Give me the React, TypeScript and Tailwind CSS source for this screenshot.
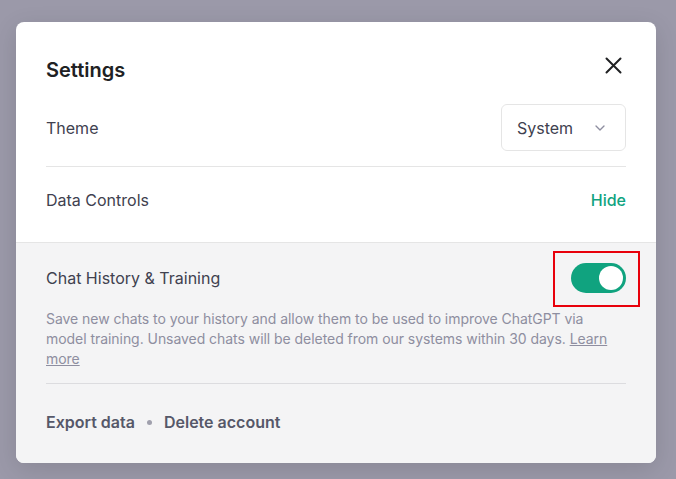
import { ChevronDown } from 'lucide-react';

export default function App() {
  return (
    <div className="min-h-[479px] w-full bg-[#9b99a9] pl-4 pt-[22px] font-['Inter',sans-serif]">
      <div className="w-[640px] overflow-hidden rounded-lg bg-white shadow-[0_6px_24px_rgba(0,0,0,0.12)]">
        <div className="px-[30px]">
          <div className="flex items-center justify-between pt-[34px]">
            <h2 className="text-xl leading-7 font-semibold text-[#202123]">Settings</h2>
            <button type="button" className="mr-[4px] -mt-[10px] text-[#202123]">
              <svg width="17" height="17" viewBox="0 0 17 17" fill="none" stroke="currentColor" strokeWidth="2" strokeLinecap="round">
                <path d="M1.5 1.5l14 14M15.5 1.5l-14 14" />
              </svg>
            </button>
          </div>
          <div className="flex items-center justify-between border-b border-[#e5e5e5] pt-5 pb-[15px]">
            <span className="text-base text-[#40414f]">Theme</span>
            <div className="flex h-[47px] w-[125px] items-center justify-between rounded-md border border-[#e5e5e5] pr-[17px] pl-[15px] text-base text-[#40414f]">
              <span>System</span>
              <ChevronDown size={16} className="text-[#8e8ea0]" />
            </div>
          </div>
          <div className="flex items-center justify-between pt-[21px] pb-[30px] text-base leading-6">
            <span className="text-[#40414f]">Data Controls</span>
            <button type="button" className="font-medium text-[#10a37f]">Hide</button>
          </div>
        </div>
        <div className="border-t border-[#e5e5e5] bg-[#f4f4f5] px-[30px]">
          <div className="pt-5">
            <div className="flex items-center justify-between">
              <span className="text-base text-[#40414f]">Chat History &amp; Training</span>
              <div className="relative">
                <span className="absolute -top-[12px] -right-[14px] -bottom-[14px] -left-[18px] border-2 border-[#e8000b]" />
                <div className="flex h-[30px] w-[55px] items-center justify-end rounded-full bg-[#10a37f] px-[3px]">
                  <span className="h-6 w-6 rounded-full bg-white" />
                </div>
              </div>
            </div>
            <p className="mt-4 border-b border-[#dcdcdf] pb-[14px] text-sm leading-5 tracking-[-0.05px] text-[#8e8ea0]">
              Save new chats to your history and allow them to be used to improve ChatGPT via model training. Unsaved
              chats will be deleted from our systems within 30 days. <span className="underline">Learn more</span>
            </p>
          </div>
          <div className="flex items-center gap-3 pt-[26px] pb-[29px] text-base leading-6 font-semibold text-[#565869]">
            <span>Export data</span>
            <span className="h-[5px] w-[5px] rounded-full bg-[#a0a0ad]" />
            <span>Delete account</span>
          </div>
        </div>
      </div>
    </div>
  );
}
